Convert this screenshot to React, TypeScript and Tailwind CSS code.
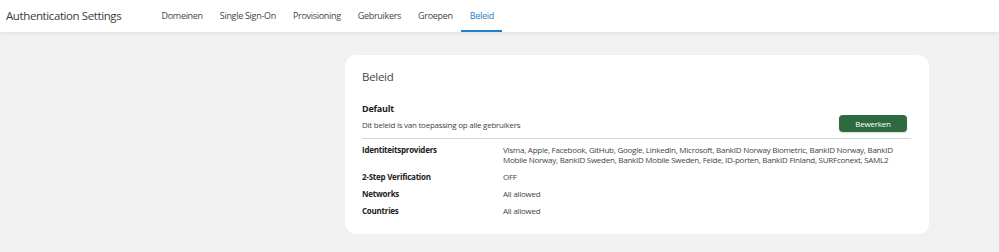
import React from "react";

const TABS = ["Domeinen", "Single Sign-On", "Provisioning", "Gebruikers", "Groepen", "Beleid"];
const ACTIVE = "Beleid";

const ROWS = [
  {
    label: "Identiteitsproviders",
    value:
      "Visma, Apple, Facebook, GitHub, Google, LinkedIn, Microsoft, BankID Norway Biometric, BankID Norway, BankID Mobile Norway, BankID Sweden, BankID Mobile Sweden, Feide, ID-porten, BankID Finland, SURFconext, SAML2",
  },
  { label: "2-Step Verification", value: "OFF" },
  { label: "Networks", value: "All allowed" },
  { label: "Countries", value: "All allowed" },
];

export default function App() {
  return (
    <div
      className="min-h-[252px] bg-[#f1f1f1] text-[#333]"
      style={{ fontFamily: '"Open Sans", "Liberation Sans", sans-serif' }}
    >
      {/* Header */}
      <header className="flex h-[32px] items-stretch bg-white shadow-[0_1px_4px_rgba(0,0,0,0.08)]">
        <div className="flex w-[153px] items-center pl-[6px] text-[11.5px] tracking-[-0.4px] text-[#3a3a3a]">
          Authentication Settings
        </div>
        <nav className="flex items-stretch">
          {TABS.map((t) => {
            const active = t === ACTIVE;
            return (
              <div
                key={t}
                className={
                  active
                    ? "flex items-center border-b-[2px] border-[#1f7fcc] px-[8.5px] pt-[2px] text-[9px] tracking-[-0.3px] text-[#2a7fc6]"
                    : "flex items-center border-b-[2px] border-transparent px-[8.5px] pt-[2px] text-[9px] tracking-[-0.3px] text-[#444]"
                }
              >
                {t}
              </div>
            );
          })}
        </nav>
      </header>

      {/* Content */}
      <main className="pb-[16px] pl-[345px] pt-[23px]">
        <section className="w-[584px] rounded-[11px] bg-white pb-[18px] pl-[17px] pr-[18px] pt-[13px]">
          <h2 className="text-[11.5px] leading-[18px] tracking-[-0.3px] text-[#444]">Beleid</h2>

          <div className="mt-[16px] flex items-end justify-between border-b border-[#d6d6d6] pb-[7px]">
            <div>
              <div className="text-[9px] font-bold leading-[14px] tracking-[-0.2px] text-[#222]">Default</div>
              <div className="mt-[3px] text-[8px] leading-[12px] tracking-[-0.25px] text-[#444]">
                Dit beleid is van toepassing op alle gebruikers
              </div>
            </div>
            <button className="mr-[4px] mb-[-1px] h-[17px] w-[68px] rounded-[4px] bg-[#2e6a40] text-[8px] tracking-[-0.2px] text-white shadow-[0_1px_2px_rgba(0,0,0,0.15)]">
              Bewerken
            </button>
          </div>

          <div className="mt-[6px] flex flex-col gap-[7px]">
            {ROWS.map((r) => (
              <div key={r.label} className="flex text-[8px] leading-[10px] tracking-[-0.25px]">
                <div className="w-[141px] shrink-0 font-bold text-[#222]">{r.label}</div>
                <div className="w-[392px] text-[#444]">{r.value}</div>
              </div>
            ))}
          </div>
        </section>
      </main>
    </div>
  );
}
